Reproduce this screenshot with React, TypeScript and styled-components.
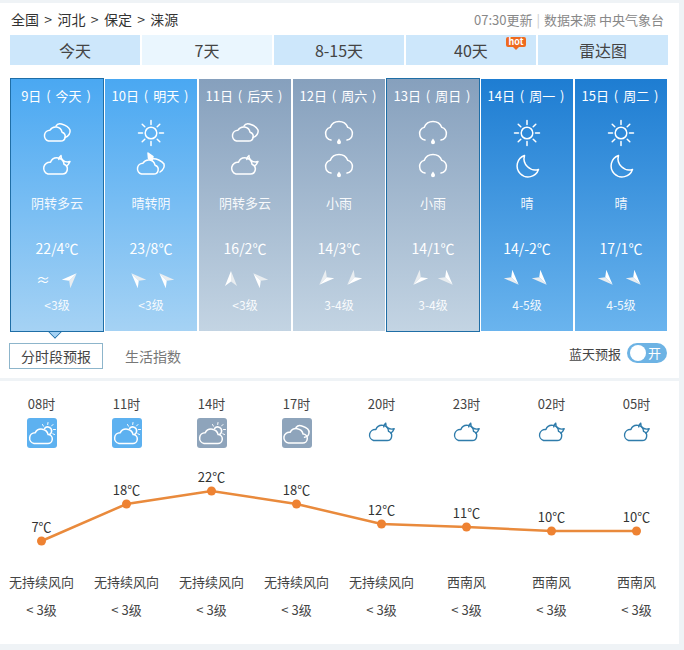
import React from 'react';
import styled, { createGlobalStyle } from 'styled-components';

const GlobalStyle = createGlobalStyle`
  html, body {
    margin: 0;
    padding: 0;
    background: #eff3f6;
  }
  body {
    font-family: "Noto Sans CJK SC", "Noto Sans", sans-serif;
    color: #333;
  }
`;

const Page = styled.div`
  width: 679px;
  height: 650px;
  padding-top: 3px;
  box-sizing: border-box;
  display: flex;
  flex-direction: column;
  gap: 3px;
`;

const Panel = styled.section<{ $height: number }>`
  background: #fff;
  height: ${(p) => p.$height}px;
  box-sizing: border-box;
  position: relative;
`;

const TopBar = styled.div`
  display: flex;
  justify-content: space-between;
  align-items: center;
  height: 32px;
  padding: 0 15px 0 11px;
`;

const Crumbs = styled.div`
  font-size: 14px;
  color: #333;
  word-spacing: 2.2px;
`;

const Source = styled.div`
  font-size: 13px;
  color: #888;
  i {
    font-style: normal;
    color: #ccc;
    margin: 0 4px;
  }
`;

const Tabs = styled.div`
  display: grid;
  grid-template-columns: repeat(5, 130px);
  column-gap: 2px;
  margin-left: 10px;
`;

const Tab = styled.div<{ $active?: boolean }>`
  position: relative;
  height: 30px;
  line-height: 30px;
  text-align: center;
  font-size: 16px;
  color: #444;
  background: ${(p) => (p.$active ? '#eaf6fe' : '#cde7fb')};
`;

const Hot = styled.span`
  position: absolute;
  left: 100px;
  top: 2px;
  width: 20px;
  height: 10px;
  line-height: 10px;
  border-radius: 2px;
  background: #ee6a1f;
  color: #fff;
  font-size: 9px;
  font-weight: 700;
  &::after {
    content: '';
    position: absolute;
    left: 7px;
    top: 10px;
    border: 3px solid transparent;
    border-top-color: #ee6a1f;
    border-bottom: 0;
  }
`;

const Days = styled.div`
  display: grid;
  grid-template-columns: repeat(7, 92px);
  column-gap: 2px;
  margin: 14px 0 0 11px;
`;

const palette = {
  blue: 'linear-gradient(#4aa8f2, #a5d2f4)',
  gray: 'linear-gradient(#86a0bd, #c3d4e3)',
  deep: 'linear-gradient(#1e7dd2, #6ab4ee)',
};

const Day = styled.div<{ $tone: keyof typeof palette; $selected?: boolean }>`
  position: relative;
  height: 252px;
  box-sizing: border-box;
  padding-top: 8px;
  display: flex;
  flex-direction: column;
  align-items: center;
  color: #fff;
  background: ${(p) => palette[p.$tone]};
  ${(p) =>
    p.$selected
      ? `
    margin: -1px;
    height: 254px;
    border: 1px solid #1f6ea6;
  `
      : ''}
`;

const Pointer = styled.span`
  position: absolute;
  left: 39px;
  bottom: -6px;
  width: 10px;
  height: 10px;
  box-sizing: border-box;
  background: #a5d2f4;
  border-right: 1px solid #1f6ea6;
  border-bottom: 1px solid #1f6ea6;
  clip-path: polygon(100% 0, 100% 100%, 0 100%);
  transform: rotate(45deg);
`;

const DateLabel = styled.div`
  font-size: 13px;
  line-height: 18px;
  white-space: nowrap;
  word-spacing: 2px;
  margin-right: 2px;
`;

const DayIcons = styled.div`
  display: flex;
  flex-direction: column;
  gap: 1px;
  margin-top: 12px;
`;

const WeatherText = styled.div`
  font-size: 13px;
  line-height: 18px;
  margin-top: 12px;
  opacity: 0.92;
`;

const Temp = styled.div`
  font-size: 14px;
  line-height: 18px;
  margin-top: 27px;
`;

const WindRow = styled.div`
  display: flex;
  justify-content: center;
  align-items: center;
  gap: 10px;
  height: 18px;
  margin-top: 13px;
`;

const Level = styled.div`
  font-size: 12px;
  line-height: 18px;
  margin-top: 8px;
  opacity: 0.92;
`;

const Calm = styled.span`
  width: 18px;
  text-align: center;
  font-size: 14px;
  line-height: 18px;
`;

const SubBar = styled.div`
  display: flex;
  align-items: center;
  height: 26px;
  margin: 12px 12px 0 9px;
`;

const SubActive = styled.div`
  width: 94px;
  height: 26px;
  line-height: 24px;
  box-sizing: border-box;
  border: 1px solid #8db5cb;
  text-align: center;
  font-size: 14px;
  color: #444;
`;

const SubTab = styled.div`
  margin-left: 22px;
  font-size: 14px;
  color: #777;
`;

const BlueSky = styled.div`
  margin-left: auto;
  display: flex;
  align-items: center;
  gap: 6px;
  font-size: 13px;
  color: #444;
  margin-top: -6px;
`;

const Toggle = styled.div`
  position: relative;
  width: 40px;
  height: 20px;
  border-radius: 10px;
  background: #6db3e4;
  color: #fff;
  font-size: 13px;
  line-height: 20px;
  text-align: right;
  padding-right: 6px;
  box-sizing: border-box;
  &::before {
    content: '';
    position: absolute;
    left: 3px;
    top: 2px;
    width: 16px;
    height: 16px;
    border-radius: 50%;
    background: #fff;
  }
`;

const Hours = styled.div`
  display: grid;
  grid-template-columns: repeat(8, 85px);
  margin-left: -1px;
  padding-top: 14px;
`;

const HourCell = styled.div`
  display: flex;
  flex-direction: column;
  align-items: center;
`;

const HourLabel = styled.div`
  font-size: 13px;
  line-height: 18px;
  color: #444;
`;

const HourIcon = styled.div<{ $bg?: string }>`
  width: 30px;
  height: 30px;
  margin-top: 5px;
  border-radius: 3px;
  background: ${(p) => p.$bg || 'transparent'};
  color: ${(p) => (p.$bg ? '#fff' : '#2f7cab')};
`;

const Chart = styled.svg`
  display: block;
  width: 679px;
  height: 115px;
  margin-top: 6px;
  text {
    font-size: 13px;
    fill: #333;
    text-anchor: middle;
    font-family: "Noto Sans CJK SC", "Noto Sans", sans-serif;
  }
`;

const Winds = styled.div`
  display: grid;
  grid-template-columns: repeat(8, 85px);
  margin-left: -1px;
  margin-top: 4px;
`;

const WindCell = styled.div`
  text-align: center;
  font-size: 13px;
  color: #444;
  line-height: 18px;
  white-space: nowrap;
  div + div {
    margin-top: 10px;
  }
`;

const Ico = styled.svg`
  display: block;
  fill: none;
  stroke: currentColor;
  stroke-width: 1.5;
  stroke-linecap: round;
  stroke-linejoin: round;
`;

const FrontCloud = 'M7.500 24h12a4.500 4.500 0 0 0 1.500-8.800 6.500 6.500 0 0 0-12-2 5.500 5.500 0 0 0-1.500 10.800z';

const CloudOver = () => (
  <Ico width={32} height={32} viewBox="0 0 32 32">
    <path d={FrontCloud} />
    <path d="M15 9c1-2 3.500-2.500 5.500-2 3.500 1 7.500 3.500 8.500 6 .7 3-1.500 6.500-5 7.500" />
  </Ico>
);

const CloudMoon = ({ size = 32 }: { size?: number }) => (
  <Ico width={size} height={size} viewBox="0 0 32 32">
    <path d="M7 24h14a5 5 0 0 0 2-9.700 7 7 0 0 0-13.500-2A6 6 0 0 0 7 24z" />
    <path d="M20 5.500c-.5 4 3.500 7.500 9 6-.8 2-2 3.500-3.500 4.500M20 5.500c-1.500 1-2.200 2.500-2.200 4" />
  </Ico>
);

const CloudSunMoon = () => (
  <Ico width={32} height={32} viewBox="0 0 32 32">
    <path d={FrontCloud} transform="translate(-1 0)" />
    <path d="M13 3l5 3.500-1 4-3.500-2z" fill="currentColor" />
    <path d="M17 9c4-1 10 2 12 5 .8 3-1 6-4 8" />
  </Ico>
);

const Sun = () => (
  <Ico width={32} height={32} viewBox="0 0 32 32">
    <circle cx="16" cy="16" r="5.800" />
    <path d="M16 3.500v4M16 24.500v4M3.500 16h4M24.500 16h4M7.200 7.200l2.600 2.600M22.200 22.200l2.600 2.600M7.200 24.800l2.600-2.600M22.200 9.800l2.600-2.600" />
  </Ico>
);

const Moon = () => (
  <Ico width={32} height={32} viewBox="0 0 32 32">
    <path d="M13.500 5.500a11 11 0 1 0 14 14c-8 2.500-16.500-5-14-14z" />
  </Ico>
);

const Rain = () => (
  <Ico width={32} height={32} viewBox="0 0 32 32">
    <path d="M8 23a6.500 6.500 0 0 1-.8-12.600 9.500 9.500 0 0 1 17.600 0A6.500 6.500 0 0 1 24 23" />
    <path d="M16 21.500c1.300 1.800 2 2.700 2 3.800a2 2 0 0 1-4 0c0-1.100.7-2 2-3.800z" fill="currentColor" stroke="none" />
  </Ico>
);

const TileSun = () => (
  <Ico width={30} height={30} viewBox="0 0 30 30">
    <path d="M7 25.500h13.500a4.500 4.500 0 0 0 .6-9 7 7 0 0 0-13-1.700 5.400 5.400 0 0 0-1.100 10.700z" />
    <path d="M17.500 10.500a4 4 0 0 1 7 3.500 4 4 0 0 1-2 2.500" />
    <path d="M21 4.500l-.3 2M26 6.500l-1.500 1.500M28.500 11.500h-2M27.500 16.500l-1.700-.7M15.500 6.500l1 1.700" strokeWidth="1" />
  </Ico>
);

const TileCloud = () => (
  <Ico width={30} height={30} viewBox="0 0 30 30">
    <path d="M6.500 25h14a4.500 4.500 0 0 0 .6-9 7 7 0 0 0-13-1.700 5.400 5.400 0 0 0-1.600 10.700z" />
    <path d="M14 9.500a5 5 0 0 1 6-1.500c3.500 1 7.500 3.500 7 7-.4 2.500-2.500 4-4.500 4.200" />
  </Ico>
);

const ArrowSvg = styled.svg<{ $deg: number }>`
  display: block;
  transform: rotate(${(p) => p.$deg}deg);
`;

const Arrow = ({ deg }: { deg: number }) => (
  <ArrowSvg $deg={deg} width="18" height="18" viewBox="0 0 18 18">
    <path d="M9 1l6 15-6-4.500z" fill="#e9edf0" />
    <path d="M9 1l-6 15 6-4.500z" fill="#fff" />
  </ArrowSvg>
);

type DayData = {
  date: string;
  tone: keyof typeof palette;
  selected?: boolean;
  icons: React.ReactNode[];
  text: string;
  temp: string;
  wind: (number | 'calm')[];
  level: string;
};

const days: DayData[] = [
  { date: '9日 ( 今天 )', tone: 'blue', selected: true, icons: [<CloudOver />, <CloudMoon />], text: '阴转多云', temp: '22/4℃', wind: ['calm', 45], level: '<3级' },
  { date: '10日 ( 明天 )', tone: 'blue', icons: [<Sun />, <CloudSunMoon />], text: '晴转阴', temp: '23/8℃', wind: [-45, -45], level: '<3级' },
  { date: '11日 ( 后天 )', tone: 'gray', icons: [<CloudOver />, <CloudMoon />], text: '阴转多云', temp: '16/2℃', wind: [0, -45], level: '<3级' },
  { date: '12日 ( 周六 )', tone: 'gray', icons: [<Rain />, <Rain />], text: '小雨', temp: '14/3℃', wind: [-135, -135], level: '3-4级' },
  { date: '13日 ( 周日 )', tone: 'gray', selected: true, icons: [<Rain />, <Rain />], text: '小雨', temp: '14/1℃', wind: [-135, 135], level: '3-4级' },
  { date: '14日 ( 周一 )', tone: 'deep', icons: [<Sun />, <Moon />], text: '晴', temp: '14/-2℃', wind: [135, 135], level: '4-5级' },
  { date: '15日 ( 周二 )', tone: 'deep', icons: [<Sun />, <Moon />], text: '晴', temp: '17/1℃', wind: [135, 135], level: '4-5级' },
];

const hours = [
  { time: '08时', temp: '7℃', y: 87, wind: '无持续风向', tile: '#5db1f0', icon: <TileSun /> },
  { time: '11时', temp: '18℃', y: 50, wind: '无持续风向', tile: '#5db1f0', icon: <TileSun /> },
  { time: '14时', temp: '22℃', y: 37, wind: '无持续风向', tile: '#8ea4bb', icon: <TileSun /> },
  { time: '17时', temp: '18℃', y: 50, wind: '无持续风向', tile: '#8ea4bb', icon: <TileCloud /> },
  { time: '20时', temp: '12℃', y: 70, wind: '无持续风向', icon: <CloudMoon size={30} /> },
  { time: '23时', temp: '11℃', y: 73, wind: '西南风', icon: <CloudMoon size={30} /> },
  { time: '02时', temp: '10℃', y: 77, wind: '西南风', icon: <CloudMoon size={30} /> },
  { time: '05时', temp: '10℃', y: 77, wind: '西南风', icon: <CloudMoon size={30} /> },
];

const pointX = (i: number) => 41.5 + i * 85;

export default function App() {
  return (
    <Page>
      <GlobalStyle />
      <Panel $height={375}>
        <TopBar>
          <Crumbs>全国 &gt; 河北 &gt; 保定 &gt; 涞源</Crumbs>
          <Source>
            07:30更新<i>|</i>数据来源 中央气象台
          </Source>
        </TopBar>
        <Tabs>
          <Tab>今天</Tab>
          <Tab $active>7天</Tab>
          <Tab>8-15天</Tab>
          <Tab>
            40天<Hot>hot</Hot>
          </Tab>
          <Tab>雷达图</Tab>
        </Tabs>
        <Days>
          {days.map((d, i) => (
            <Day key={d.date} $tone={d.tone} $selected={d.selected}>
              <DateLabel>{d.date}</DateLabel>
              <DayIcons>
                {d.icons.map((icon, n) => (
                  <React.Fragment key={n}>{icon}</React.Fragment>
                ))}
              </DayIcons>
              <WeatherText>{d.text}</WeatherText>
              <Temp>{d.temp}</Temp>
              <WindRow>
                {d.wind.map((w, n) =>
                  w === 'calm' ? <Calm key={n}>≈</Calm> : <Arrow key={n} deg={w} />,
                )}
              </WindRow>
              <Level>{d.level}</Level>
              {i === 0 && <Pointer />}
            </Day>
          ))}
        </Days>
        <SubBar>
          <SubActive>分时段预报</SubActive>
          <SubTab>生活指数</SubTab>
          <BlueSky>
            蓝天预报
            <Toggle>开</Toggle>
          </BlueSky>
        </SubBar>
      </Panel>
      <Panel $height={263}>
        <Hours>
          {hours.map((h) => (
            <HourCell key={h.time}>
              <HourLabel>{h.time}</HourLabel>
              <HourIcon $bg={h.tile}>{h.icon}</HourIcon>
            </HourCell>
          ))}
        </Hours>
        <Chart viewBox="0 0 679 115">
          <polyline
            points={hours.map((h, i) => `${pointX(i)},${h.y}`).join(' ')}
            fill="none"
            stroke="#e98a3c"
            strokeWidth="2.500"
          />
          {hours.map((h, i) => (
            <g key={h.time}>
              <circle cx={pointX(i)} cy={h.y} r="4.500" fill="#ee8232" />
              <text x={pointX(i)} y={h.y - 9}>
                {h.temp}
              </text>
            </g>
          ))}
        </Chart>
        <Winds>
          {hours.map((h) => (
            <WindCell key={h.time}>
              <div>{h.wind}</div>
              <div>&lt; 3级</div>
            </WindCell>
          ))}
        </Winds>
      </Panel>
    </Page>
  );
}
